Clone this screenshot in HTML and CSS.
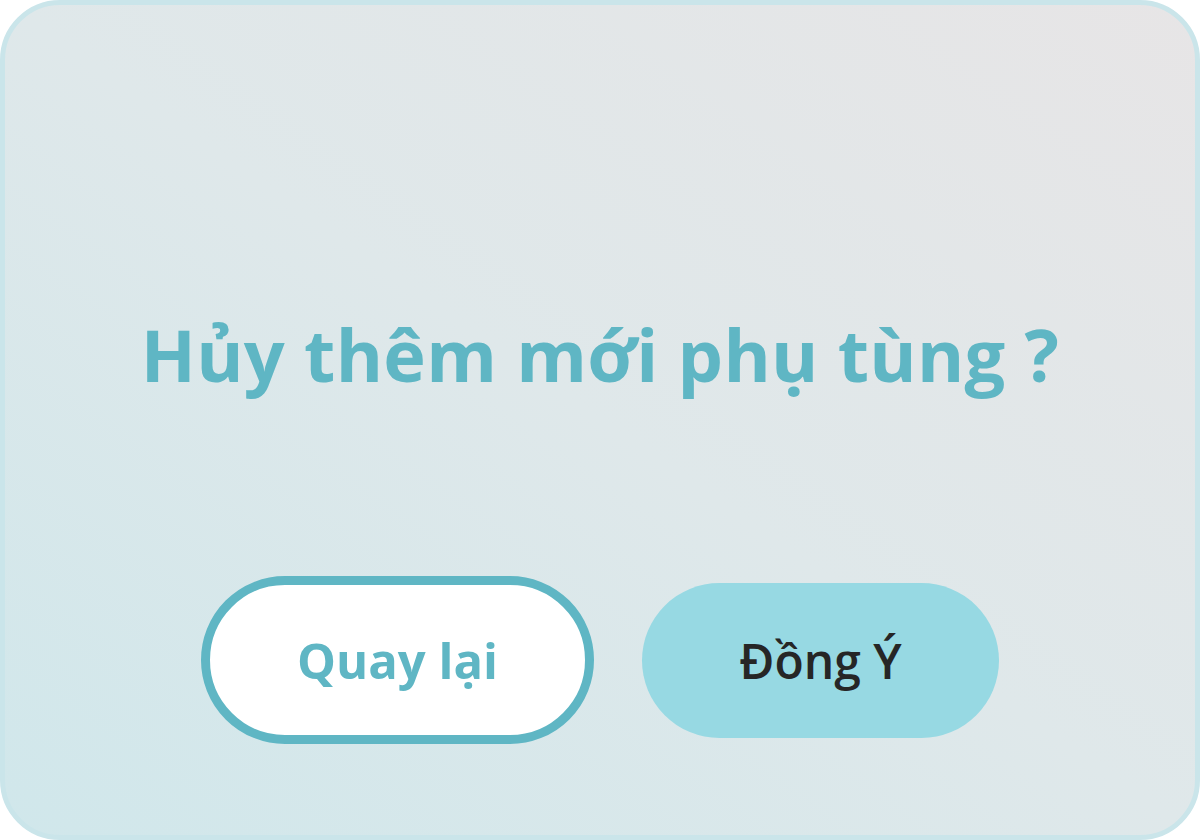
FILE: index.html
```html
<!DOCTYPE html>
<html lang="vi">
<head>
<meta charset="utf-8">
<link rel="stylesheet" href="styles.css">
</head>
<body>
<div class="card">
  <h1 class="title">Hủy thêm mới phụ tùng ?</h1>
  <div class="actions">
    <button class="btn btn-back">Quay lại</button>
    <button class="btn btn-ok">Đồng Ý</button>
  </div>
</div>
</body>
</html>
```
FILE: styles.css
```css
html, body {
  margin: 0;
  padding: 0;
  background: #ffffff;
}
.card {
  width: 1200px;
  height: 840px;
  box-sizing: border-box;
  border: 5px solid #cae5ea;
  border-radius: 60px;
  background: linear-gradient(to top right, #d0e7eb 0%, #dfe8ea 50%, #e7e5e6 100%);
  padding-top: 299px;
  display: flex;
  flex-direction: column;
  align-items: center;
  font-family: "Open Sans", "Noto Sans", sans-serif;
}
.title {
  margin: 0;
  font-size: 72px;
  line-height: 100px;
  font-weight: 700;
  color: #5fb6c4;
  letter-spacing: 0.3px;
}
.actions {
  margin-top: 172px;
  display: flex;
  align-items: center;
  gap: 48px;
}
.btn {
  font-family: "Open Sans", "Noto Sans", sans-serif;
  border-radius: 999px;
  cursor: pointer;
  padding: 0;
}
.btn-back {
  width: 393px;
  height: 168px;
  background: #ffffff;
  border: 9px solid #5fb6c4;
  color: #5fb6c4;
  font-size: 49px;
  font-weight: 700;
}
.btn-ok {
  width: 357px;
  height: 155px;
  background: #97d9e3;
  border: none;
  color: #262626;
  font-size: 48px;
  font-weight: 600;
}
```
